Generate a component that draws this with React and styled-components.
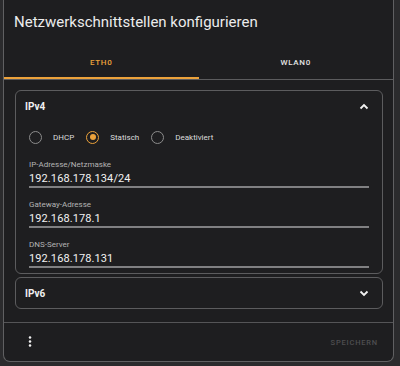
import React from "react";
import styled, { createGlobalStyle } from "styled-components";

const Global = createGlobalStyle`
  html, body { margin: 0; padding: 0; background: #2b2b2d; }
  body { font-family: Roboto, "Liberation Sans", sans-serif; }
  * { box-sizing: border-box; }
`;

const ORANGE = "#eca23b";

const Dialog = styled.div`
  margin-left: 3px;
  width: 391px;
  height: 362px;
  background: #1e1e20;
  border: 1px solid #606062;
  border-top: none;
  border-radius: 0 0 7px 7px;
  display: flex;
  flex-direction: column;
  color: #e6e6e6;
`;

const Title = styled.h2`
  margin: 0;
  padding: 12px 0 0 10px;
  height: 32px;
  font-size: 15px;
  line-height: 20px;
  font-weight: 400;
  color: #ececec;
`;

const TabList = styled.div`
  display: flex;
  border-bottom: 1px solid #5c5c5e;
`;

const Tab = styled.div`
  flex: 1;
  height: 47px;
  padding-top: 26px;
  text-align: center;
  font-size: 8px;
  line-height: 10px;
  font-weight: 500;
  letter-spacing: 0.7px;
  color: ${(p) => (p.$active ? ORANGE : "#e4e4e4")};
  border-bottom: 2px solid ${(p) => (p.$active ? ORANGE : "transparent")};
`;

const Content = styled.div`
  padding: 10px 10px 13px 11px;
  display: flex;
  flex-direction: column;
  gap: 3px;
  border-bottom: 1px solid #555557;
`;

const Accordion = styled.div`
  border: 1px solid #5c5c5e;
  border-radius: 6px;
`;

const AccHeader = styled.div`
  height: 30px;
  display: flex;
  align-items: center;
  justify-content: space-between;
  padding: 0 13px 0 9px;
  font-size: 10px;
  font-weight: 700;
  color: #f0f0f0;
`;

const Details = styled.div`
  padding: 6px 13px 5px 13px;
`;

const RadioRow = styled.div`
  height: 20px;
  display: flex;
  align-items: center;
`;

const RadioOption = styled.label`
  display: flex;
  align-items: center;
  gap: 11px;
  margin-right: 12px;
  font-size: 8px;
  color: #dcdcdc;
`;

const RadioCircle = styled.span`
  width: 13px;
  height: 13px;
  border-radius: 50%;
  border: 1.5px solid ${(p) => (p.$checked ? ORANGE : "#8c8c8c")};
  display: flex;
  align-items: center;
  justify-content: center;
  &::after {
    content: "";
    width: 6px;
    height: 6px;
    border-radius: 50%;
    background: ${(p) => (p.$checked ? ORANGE : "transparent")};
  }
`;

const Field = styled.div`
  margin-top: ${(p) => p.$mt}px;
  display: flex;
  flex-direction: column;
`;

const FieldLabel = styled.div`
  font-size: 8px;
  line-height: 10px;
  color: #b4b4b4;
`;

const FieldValue = styled.div`
  margin-top: 2px;
  font-size: 11px;
  line-height: 14px;
  color: #f2f2f2;
  letter-spacing: 0.1px;
`;

const Underline = styled.div`
  height: 2px;
  background: #808082;
`;

const Footer = styled.div`
  flex: 1;
  display: flex;
  align-items: center;
  justify-content: space-between;
  padding: 0 15px 0 24px;
`;

const SaveButton = styled.span`
  font-size: 7.5px;
  font-weight: 500;
  letter-spacing: 0.8px;
  color: #4e4e50;
`;

const Chevron = ({ up }) => (
  <svg width="10" height="7" viewBox="0 0 10 7">
    <polyline
      points={up ? "1.5,5.5 5,2 8.5,5.5" : "1.5,1.5 5,5 8.5,1.5"}
      fill="none"
      stroke="#f2f2f2"
      strokeWidth="1.8"
    />
  </svg>
);

const Kebab = () => (
  <svg width="4" height="12" viewBox="0 0 4 12">
    <circle cx="2" cy="1.6" r="1.25" fill="#f2f2f2" />
    <circle cx="2" cy="5.6" r="1.25" fill="#f2f2f2" />
    <circle cx="2" cy="9.6" r="1.25" fill="#f2f2f2" />
  </svg>
);

const fields = [
  { label: "IP-Adresse/Netzmaske", value: "192.168.178.134/24", mt: 13 },
  { label: "Gateway-Adresse", value: "192.168.178.1", mt: 12 },
  { label: "DNS-Server", value: "192.168.178.131", mt: 12 },
];

const options = [
  { label: "DHCP", checked: false },
  { label: "Statisch", checked: true },
  { label: "Deaktiviert", checked: false },
];

export default function App() {
  return (
    <>
      <Global />
      <Dialog>
        <Title>Netzwerkschnittstellen konfigurieren</Title>
        <TabList>
          <Tab $active>ETH0</Tab>
          <Tab>WLAN0</Tab>
        </TabList>
        <Content>
          <Accordion>
            <AccHeader>
              <span>IPv4</span>
              <Chevron up />
            </AccHeader>
            <Details>
              <RadioRow>
                {options.map((o) => (
                  <RadioOption key={o.label}>
                    <RadioCircle $checked={o.checked} />
                    {o.label}
                  </RadioOption>
                ))}
              </RadioRow>
              {fields.map((f) => (
                <Field key={f.label} $mt={f.mt}>
                  <FieldLabel>{f.label}</FieldLabel>
                  <FieldValue>{f.value}</FieldValue>
                  <Underline />
                </Field>
              ))}
            </Details>
          </Accordion>
          <Accordion>
            <AccHeader>
              <span>IPv6</span>
              <Chevron />
            </AccHeader>
          </Accordion>
        </Content>
        <Footer>
          <Kebab />
          <SaveButton>SPEICHERN</SaveButton>
        </Footer>
      </Dialog>
    </>
  );
}
